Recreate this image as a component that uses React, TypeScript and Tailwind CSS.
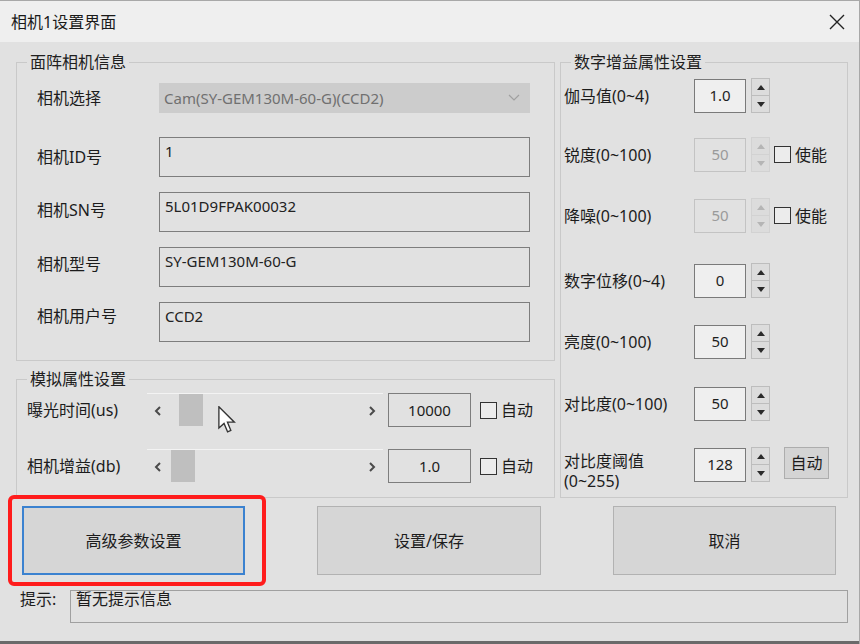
import type { ReactNode } from "react";

function GroupBox({ title, className, children }: { title: string; className: string; children: ReactNode }) {
	return (
		<fieldset className={`shrink-0 border border-[#c9c9c9] ${className}`}>
			<legend className="ml-[10px] px-[3px] text-[16px] leading-[22px] text-[#202020]">{title}</legend>
			{children}
		</fieldset>
	);
}

function TextBox({ value }: { value: string }) {
	return (
		<div className="h-[40px] w-[371px] border border-[#7d7d7d] px-[5px] pt-[3px] text-[15px] leading-[20px] text-[#222]">
			{value}
		</div>
	);
}

function InfoRow({ label, lift = "", children }: { label: string; lift?: string; children: ReactNode }) {
	return (
		<div className="flex items-center">
			<div className={`w-[142px] pl-[20px] text-[16px] leading-[22px] ${lift}`}>{label}</div>
			{children}
		</div>
	);
}

function Triangle({ up, disabled }: { up?: boolean; disabled?: boolean }) {
	return (
		<svg width="8" height="5" viewBox="0 0 8 5">
			<path d={up ? "M0 5 L4 0 L8 5 Z" : "M0 0 L4 5 L8 0 Z"} fill={disabled ? "#b5b5b5" : "#2a2a2a"} />
		</svg>
	);
}

function Spin({ value, disabled }: { value: string; disabled?: boolean }) {
	return (
		<div className="flex items-center gap-[5px]">
			<div
				className={`flex h-[34px] w-[52px] items-center justify-center border text-[15px] ${
					disabled ? "border-[#c3c3c3] bg-[#e1e1e1] text-[#9a9a9a]" : "border-[#7a7a7a] bg-[#efefef] text-[#1e1e1e]"
				}`}
			>
				{value}
			</div>
			<div className="flex h-[35px] w-[19px] flex-col">
				<div
					className={`flex flex-1 items-center justify-center border bg-[#dcdcdc] ${
						disabled ? "border-[#d2d2d2]" : "border-[#bdbdbd]"
					}`}
				>
					<Triangle up disabled={disabled} />
				</div>
				<div
					className={`flex flex-1 items-center justify-center border border-t-0 bg-[#dcdcdc] ${
						disabled ? "border-[#d2d2d2]" : "border-[#bdbdbd]"
					}`}
				>
					<Triangle disabled={disabled} />
				</div>
			</div>
		</div>
	);
}

function CheckLabel({ label }: { label: string }) {
	return (
		<div className="flex items-center gap-[4px]">
			<div className="h-[17px] w-[17px] border border-[#333] bg-[#ececec]" />
			<span className="text-[16px] leading-[22px]">{label}</span>
		</div>
	);
}

function DigitalRow({ label, className, children }: { label: ReactNode; className: string; children: ReactNode }) {
	return (
		<div className={`flex items-center ${className}`}>
			<div className="w-[133px] pl-[3px] text-[16px] leading-[22px]">{label}</div>
			{children}
		</div>
	);
}

function Slider({ label, value, thumb }: { label: string; value: string; thumb: number }) {
	return (
		<div className="flex items-center">
			<div className="w-[130px] pl-[10px] text-[16px] leading-[22px]">{label}</div>
			<div className="relative flex h-[34px] w-[236px] items-center justify-between border-t border-[#f3f3f3] px-[7px]">
				<svg width="8" height="10" viewBox="0 0 8 10">
					<path d="M6 1 L2 5 L6 9" stroke="#4a4a4a" strokeWidth="2" fill="none" />
				</svg>
				<div className="absolute top-0 h-[32px] w-[24px] bg-[#bfbfbf]" style={{ left: thumb }} />
				<svg width="8" height="10" viewBox="0 0 8 10">
					<path d="M2 1 L6 5 L2 9" stroke="#4a4a4a" strokeWidth="2" fill="none" />
				</svg>
			</div>
			<div className="ml-[5px] flex h-[34px] w-[83px] items-center justify-center border border-[#7d7d7d] text-[15px]">
				{value}
			</div>
			<div className="ml-[9px]">
				<CheckLabel label="自动" />
			</div>
		</div>
	);
}

export default function App() {
	return (
		<div className="relative flex h-[644px] w-[860px] flex-col overflow-hidden border-t border-r border-[#a8a8a8] bg-[#e1e1e1] font-['Noto_Sans','Noto_Sans_CJK_SC',sans-serif] text-[#1c1c1c]">
			<header className="flex h-[41px] shrink-0 items-center justify-between bg-[#efefef] pl-[11px] pr-[14px]">
				<span className="text-[16px] leading-[22px] text-[#1a1a1a]">相机1设置界面</span>
				<svg width="16" height="16" viewBox="0 0 16 16">
					<path d="M1 1 L15 15 M15 1 L1 15" stroke="#222" strokeWidth="1.4" />
				</svg>
			</header>

			<div className="flex flex-1 flex-col pl-[16px] pr-[11px] pt-[9px]">
				<div className="flex gap-[5px]">
					<div className="flex w-[539px] shrink-0 flex-col gap-[7px]">
						<GroupBox title="面阵相机信息" className="h-[310px]">
							<div className="flex flex-col pt-[10px]">
								<InfoRow label="相机选择">
									<div className="flex h-[30px] w-[371px] items-center justify-between bg-[#cccccc] pl-[5px] pr-[10px] text-[15px] text-[#707070]">
										<span>Cam(SY-GEM130M-60-G)(CCD2)</span>
										<svg width="12" height="8" viewBox="0 0 12 8">
											<path d="M1 1 L6 6 L11 1" stroke="#a0a0a0" strokeWidth="1.2" fill="none" />
										</svg>
									</div>
								</InfoRow>
								<div className="mt-[24px] flex flex-col gap-[15px]">
									<InfoRow label="相机ID号">
										<TextBox value="1" />
									</InfoRow>
									<InfoRow label="相机SN号" lift="pb-[4px]">
										<TextBox value="5L01D9FPAK00032" />
									</InfoRow>
									<InfoRow label="相机型号" lift="pb-[6px]">
										<TextBox value="SY-GEM130M-60-G" />
									</InfoRow>
									<InfoRow label="相机用户号" lift="pb-[12px]">
										<TextBox value="CCD2" />
									</InfoRow>
								</div>
							</div>
						</GroupBox>
						<GroupBox title="模拟属性设置" className="h-[130px]">
							<div className="flex flex-col gap-[22px] pt-[3px]">
								<Slider label="曝光时间(us)" value="10000" thumb={32} />
								<Slider label="相机增益(db)" value="1.0" thumb={24} />
							</div>
						</GroupBox>
					</div>

					<GroupBox title="数字增益属性设置" className="h-[447px] w-[288px]">
						<div className="flex flex-col pt-[5px]">
							<DigitalRow label="伽马值(0~4)" className="">
								<Spin value="1.0" />
							</DigitalRow>
							<DigitalRow label="锐度(0~100)" className="mt-[24px]">
								<Spin value="50" disabled />
								<div className="ml-[4px]">
									<CheckLabel label="使能" />
								</div>
							</DigitalRow>
							<DigitalRow label="降噪(0~100)" className="mt-[26px]">
								<Spin value="50" disabled />
								<div className="ml-[4px]">
									<CheckLabel label="使能" />
								</div>
							</DigitalRow>
							<DigitalRow label="数字位移(0~4)" className="mt-[30px]">
								<Spin value="0" />
							</DigitalRow>
							<DigitalRow label="亮度(0~100)" className="mt-[26px]">
								<Spin value="50" />
							</DigitalRow>
							<DigitalRow label="对比度(0~100)" className="mt-[27px]">
								<Spin value="50" />
							</DigitalRow>
							<div className="mt-[26px] flex items-start">
								<div className="mt-[4px] flex w-[133px] flex-col pl-[3px] text-[16px] leading-[20px]">
									<span>对比度阈值</span>
									<span>(0~255)</span>
								</div>
								<Spin value="128" />
								<button className="ml-[14px] h-[32px] w-[45px] border border-[#adadad] bg-[#d4d4d4] text-[16px] leading-[22px]">
									自动
								</button>
							</div>
						</div>
					</GroupBox>
				</div>

				<div className="mt-[8px] flex gap-[72px] pl-[6px]">
					<button className="h-[69px] w-[223px] border-2 border-[#3b82d0] bg-[#d6d6d6] text-[16px]">高级参数设置</button>
					<button className="h-[69px] w-[224px] border border-[#b2b2b2] bg-[#d6d6d6] text-[16px]">设置/保存</button>
					<button className="h-[69px] w-[223px] border border-[#b2b2b2] bg-[#d6d6d6] text-[16px]">取消</button>
				</div>

				<div className="mt-[15px] flex items-start">
					<div className="w-[54px] pl-[4px] text-[16px] leading-[18px]">提示:</div>
					<div className="h-[33px] w-[779px] border border-[#a0a0a0] pl-[5px] text-[16px] leading-[16px]">
						暂无提示信息
					</div>
				</div>
			</div>
			<div className="h-[3px] shrink-0 bg-[#6a6a6a]" />

			<svg className="absolute left-[218px] top-[405px]" width="18" height="28" viewBox="0 0 12 19">
				<path d="M0.5 0.5 L0.5 15 L4 11.8 L6.4 17.5 L8.6 16.6 L6.3 11 L11 11 Z" fill="#fff" stroke="#333" strokeWidth="0.9" />
			</svg>
			<div className="absolute left-[8px] top-[494px] h-[91px] w-[258px] rounded-[6px] border-[4px] border-[#ff1c1c]" />
		</div>
	);
}
